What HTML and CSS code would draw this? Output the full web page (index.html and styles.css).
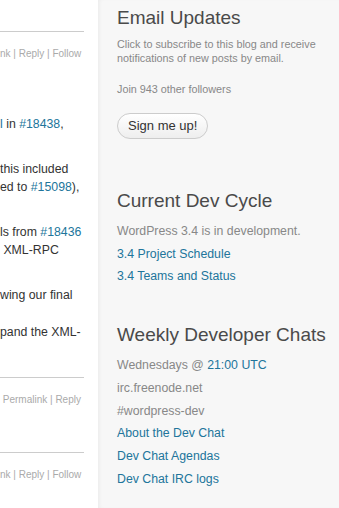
FILE: index.html
```html
<!DOCTYPE html>
<html lang="en">
<head>
    <meta charset="UTF-8">
    <meta name="viewport" content="width=device-width, initial-scale=1.0">
    <title>Make WordPress Core</title>
    <link rel="stylesheet" href="styles.css">
</head>
<body>

    <div id="main">
        <div class="comment-end first">
            <div class="rule"></div>
            <div class="meta">nk | Reply | Follow</div>
        </div>

        <div class="comment-body">
            <p><a href="#">l</a> in <a href="#">#18438</a>,</p>
            <p>this included<br>ed to <a href="#">#15098</a>),</p>
            <p>ls from <a href="#">#18436</a><br>&nbsp;XML-RPC</p>
            <p>wing our final<br>&nbsp;<br>pand the XML-</p>
        </div>

        <div class="comment-end second">
            <div class="rule"></div>
            <div class="meta">&nbsp;Permalink | Reply</div>
        </div>

        <div class="comment-end third">
            <div class="rule"></div>
            <div class="meta">nk | Reply | Follow</div>
        </div>
    </div>

    <div id="sidebar">
        <div class="widget">
            <h3>Email Updates</h3>
            <p class="small">Click to subscribe to this blog and receive notifications of new posts by email.</p>
            <p class="small">Join 943 other followers</p>
            <button class="signup">Sign me up!</button>
        </div>

        <div class="widget">
            <h3>Current Dev Cycle</h3>
            <ul>
                <li class="muted">WordPress 3.4 is in development.</li>
                <li><a href="#">3.4 Project Schedule</a></li>
                <li><a href="#">3.4 Teams and Status</a></li>
            </ul>
        </div>

        <div class="widget">
            <h3>Weekly Developer Chats</h3>
            <ul>
                <li class="muted">Wednesdays @ <a href="#">21:00 UTC</a></li>
                <li class="muted">irc.freenode.net</li>
                <li class="muted">#wordpress-dev</li>
                <li><a href="#">About the Dev Chat</a></li>
                <li><a href="#">Dev Chat Agendas</a></li>
                <li><a href="#">Dev Chat IRC logs</a></li>
            </ul>
        </div>
    </div>

</body>
</html>
```

FILE: styles.css
```css
body {
    font-family: 'Liberation Sans', Arial, sans-serif;
    display: flex;
    height: 100vh;
    margin: 0;
    background-color: #fff;
    color: #333;
    overflow: hidden;
}

a {
    color: #21759b;
    text-decoration: none;
}

#main {
    width: 98px;
    flex-shrink: 0;
    overflow: hidden;
    background-color: #fff;
}

.comment-end.first {
    padding-top: 31px;
}

.comment-end.second {
    padding-top: 36px;
}

.comment-end.third {
    padding-top: 44px;
}

.rule {
    width: 84px;
    border-top: 1px solid #ccc;
}

.meta {
    margin-top: 14px;
    font-size: 10px;
    line-height: 16px;
    color: #aaa;
    white-space: nowrap;
}

.comment-body {
    padding-top: 53px;
    font-size: 12.3px;
    line-height: 18.5px;
    white-space: nowrap;
}

.comment-body p {
    margin: 0 0 26px;
}

.comment-body p:last-child {
    margin-bottom: 0;
}

#sidebar {
    flex: 1;
    padding: 6px 0 0 19px;
    background-color: #f7f7f7;
    box-shadow: inset 3px 0 4px -2px rgba(0, 0, 0, 0.06);
}

.widget {
    margin-bottom: 35px;
}

h3 {
    margin: 0 0 7px;
    font-size: 19px;
    font-weight: normal;
    line-height: 24px;
    color: #4a4a4a;
}

.small {
    margin: 0 0 17px;
    font-size: 10.8px;
    line-height: 14px;
    color: #888;
}

.signup {
    display: block;
    margin: 2px 0 50px;
    padding: 5px 10px;
    font-family: inherit;
    font-size: 13px;
    line-height: 14px;
    color: #333;
    background: linear-gradient(#fff, #eee);
    border: 1px solid #ccc;
    border-radius: 13px;
}

.widget:first-child {
    margin-bottom: 0;
}

ul {
    margin: 0;
    padding: 0;
    list-style: none;
    font-size: 12.3px;
    line-height: 22.7px;
}

.muted {
    color: #888;
}
```
